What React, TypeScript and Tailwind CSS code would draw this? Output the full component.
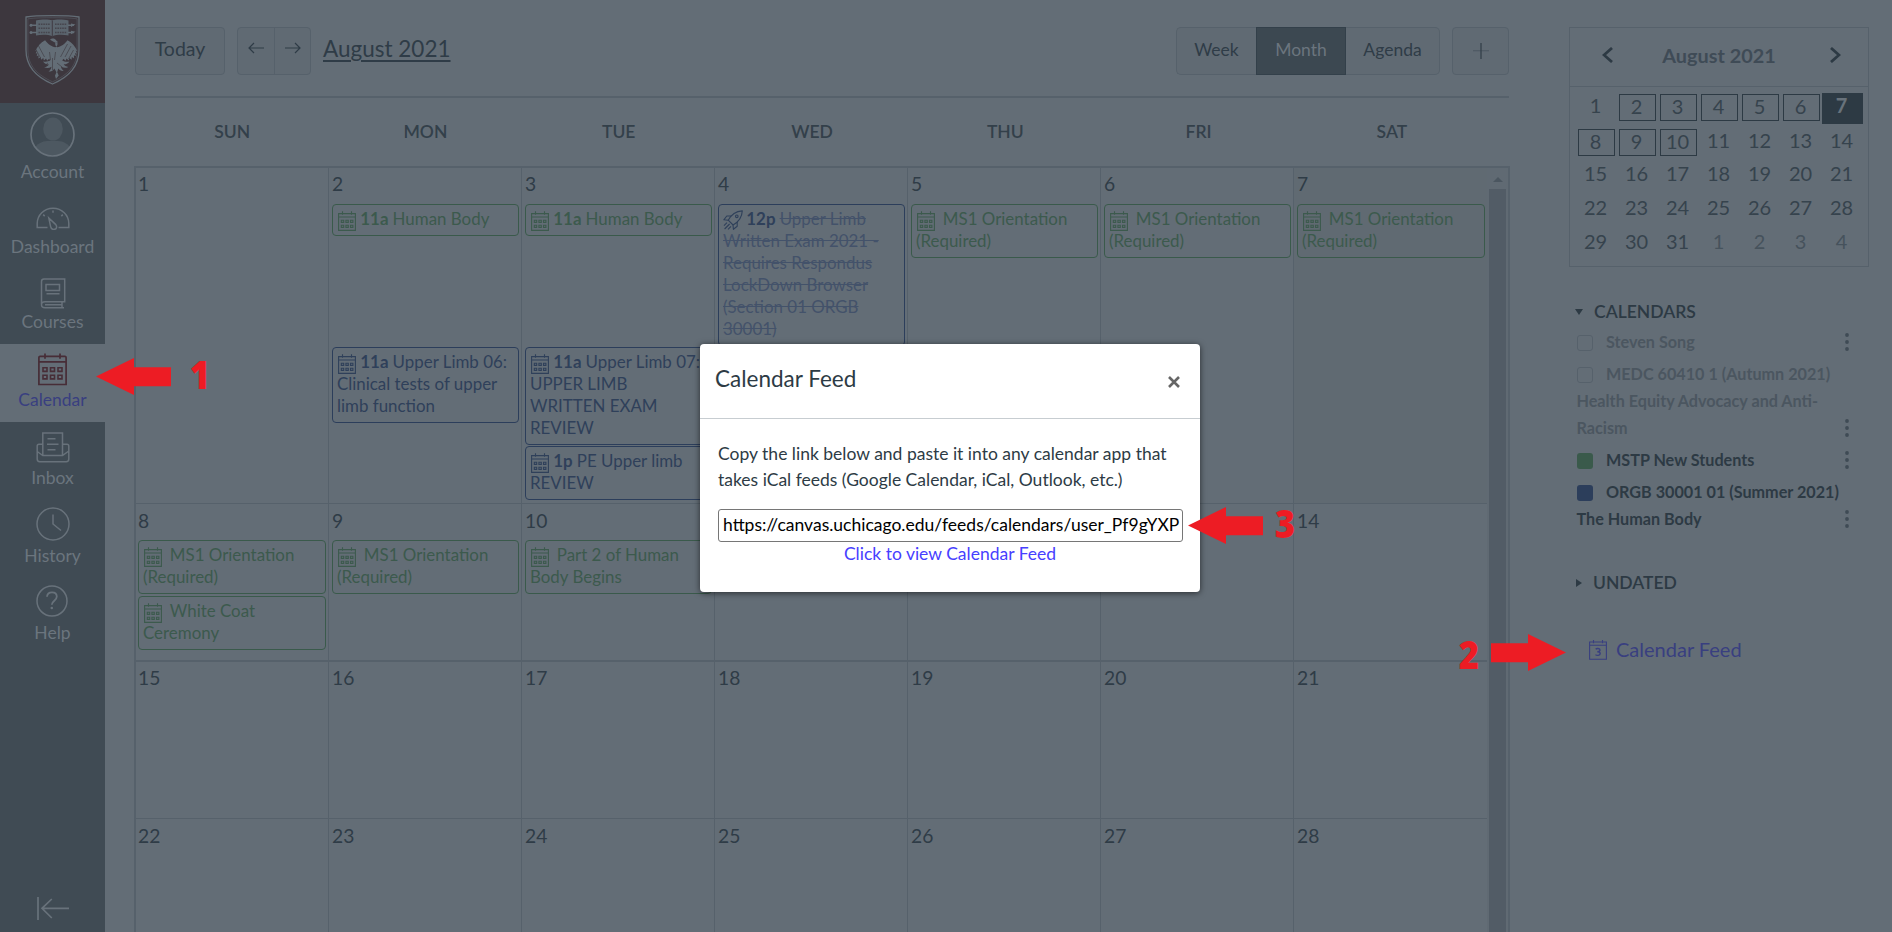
import type { ReactNode } from 'react';

type Tone = 'green' | 'blue';
type CalEvent = {
  time?: string;
  title: string;
  tone: Tone;
  done?: boolean;
  spacing?: string;
};
type Day = { n: number; events?: CalEvent[] };

const orientation: CalEvent = { title: 'MS1 Orientation (Required)', tone: 'green' };
const humanBody: CalEvent = { time: '11a', title: 'Human Body', tone: 'green' };

const weeks: { className: string; numberClass?: string; days: Day[] }[] = [
  {
    className: 'h-[336px] border-b',
    days: [
      { n: 1 },
      {
        n: 2,
        events: [
          humanBody,
          { time: '11a', title: 'Upper Limb 06: Clinical tests of upper limb function', tone: 'blue', spacing: 'mt-[111px]' },
        ],
      },
      {
        n: 3,
        events: [
          humanBody,
          { time: '11a', title: 'Upper Limb 07: UPPER LIMB WRITTEN EXAM REVIEW', tone: 'blue', spacing: 'mt-[111px]' },
          { time: '1p', title: 'PE Upper limb REVIEW', tone: 'blue', spacing: 'mt-px' },
        ],
      },
      {
        n: 4,
        events: [
          {
            time: '12p',
            title: 'Upper Limb Written Exam 2021 - Requires Respondus LockDown Browser (Section 01 ORGB 30001)',
            tone: 'blue',
            done: true,
          },
        ],
      },
      { n: 5, events: [orientation] },
      { n: 6, events: [orientation] },
      { n: 7, events: [orientation] },
    ],
  },
  {
    className: 'h-[158px] border-b-2',
    numberClass: 'pt-px',
    days: [
      { n: 8, events: [orientation, { title: 'White Coat Ceremony', tone: 'green', spacing: 'mt-0.5' }] },
      { n: 9, events: [orientation] },
      { n: 10, events: [{ title: 'Part 2 of Human Body Begins', tone: 'green' }] },
      { n: 11 },
      { n: 12 },
      { n: 13 },
      { n: 14 },
    ],
  },
  { className: 'h-[157px] border-b', days: [15, 16, 17, 18, 19, 20, 21].map((n) => ({ n })) },
  { className: 'h-[157px]', numberClass: 'pt-px', days: [22, 23, 24, 25, 26, 27, 28].map((n) => ({ n })) },
];

function MonthGlyph({ className }: { className: string }) {
  return (
    <svg viewBox="0 0 18 20" className={className} fill="none" stroke="currentColor" strokeWidth="1.1">
      <path d="M.6 2.6h16.8v16.8H.6zM.6 6h16.8M4.5.2v3.6M13.5.2v3.6" />
      <path d="M3.3 9.2h2.4v2.2H3.3zM7.9 9.2h2.4v2.2H7.9zM12.5 9.2h2.4v2.2h-2.4zM3.3 14.2h2.4v2.2H3.3zM7.9 14.2h2.4v2.2H7.9zM12.5 14.2h2.4v2.2h-2.4z" />
    </svg>
  );
}

function RocketGlyph({ className }: { className: string }) {
  return (
    <svg viewBox="0 0 20 20" className={className} fill="none" stroke="currentColor" strokeWidth="1.1" strokeLinejoin="round">
      <path d="M5.2 10.2C8 5 12 1.400 19.300.900c-.4 7.200-4 11.200-9.200 14.100z" />
      <path d="M8.200 6H3.800L.8 9.800l4.400.4M14.200 12v4.300l-3.800 3-.4-4.400M1 15.600l3-3M1.600 19l5-5M5 19.300l3-3" />
      <circle cx="13.800" cy="6.300" r="1.300" />
    </svg>
  );
}

function Crest() {
  return (
    <svg viewBox="0 0 105 103" className="h-[103px] w-[105px]" fill="none" stroke="#636d76">
      <path strokeWidth="1.300" d="M26 17c8-1.300 18-1.300 26.500-1.300S71 15.700 79 17v33c0 17-10 27-26.500 34C36 77 26 67 26 50z" />
      <path strokeWidth=".4" d="M27.900 18.800c8-1 16-1.100 24.600-1.100s16.600.100 24.600 1.100V50c0 16-9.600 25-24.600 31.800C37.500 75 27.900 66 27.900 50z" />
      <path fill="#5b656e" stroke="none" d="M36 20.500c5-1.200 12-1.500 16.200-.2 4.300-1.300 11.300-1 16.300.2V35.500c-5-1-12-1.200-16.300.8-4.200-2-11.200-1.800-16.200-.8z" />
      <path stroke="#3d373e" strokeWidth=".9" d="M52.300 20.500V36" />
      <path stroke="#3d373e" strokeWidth="1.500" strokeDasharray="1.600 .8" d="M38.500 24.300h11.500M38.500 28.300h11.500M38.500 32.500h11.500M55 24.300h11.500M55 28.300h11.500M55 32.500h11.500" opacity=".7" />
      <path strokeWidth="1.500" d="M30.500 25.200H37M30.500 32.400H37M68 25.200h6M68 32.400h6" />
      <g fill="#636d76" stroke="none">
        <circle cx="31" cy="25.200" r="1.500" />
        <circle cx="31" cy="32.400" r="1.500" />
        <path d="M71 23.500l4.500 1-4.500 2.500zM71 30.700l4.500 1-4.500 2.500z" />
        <path d="M50 39.800c1.500-1.800 5-1.800 6 .4l2.200 2-2.800.3c-.6 2 .2 3.800 1.800 4.800 3.600-.5 7.800-3.300 10.300-7 4.600 2.600 7.600 6 9.800 10.700l-1.600-.6 1.200 3.400-1.800-.9.8 3.400-2-1.100.3 3.200-2.400-1.500-.2 2.800-2.300-1.700-.6 2.500-2.200-1.900-1 2.200-2-2-1.300 1.700c1.900 1 4.300 1.600 7.200 1-1 2-3.200 2.900-5.700 2.800.9 1.500 2.400 2.400 4.600 2.700-2.200 1.400-5 1-7.300-.4.200 1.700 1 3 2.600 4.300-2.400.2-4.200-.6-5.300-2.400l-1.100 3.700 1.500 3.200-2.700 3.700-1-3.300 1.400-3.600-2-3.800c-1.400 2.200-3.300 3.200-5.900 3.200 1.900-1.300 2.800-3 3-4.800-2.300 1.500-5 1.700-7.400.5 2.400-.5 4-1.500 4.800-2.900-2.700 0-4.700-1-5.900-3 2.900.6 5.300.1 7.400-.9l-1.300-1.700-2 2-1-2.200-2.200 1.900-.6-2.500-2.300 1.700-.2-2.800-2.400 1.500.3-3.200-2 1.100.8-3.400-1.800.9 1.200-3.400-1.600.6c2.200-4.700 5.200-8.100 9.800-10.700 2.500 3.700 6.700 6.500 10.300 7 1.800-1 2.600-2.600 2-4.500l-3-.6z" />
      </g>
      <path stroke="#3d373e" strokeWidth=".6" d="M34 46l6 11M31.500 50l5 9M37.500 44l7 13M71 46l-6 11M73.500 50l-5 9M67.500 44l-7 13M49.500 52l1 8M55.500 52l-1 8M52.500 58v12M48 63l-5 4M57 63l5 4" />
    </svg>
  );
}

function EventCard({ event }: { event: CalEvent }) {
  const tone = event.tone === 'green' ? 'border-[#3a5a4b] text-[#3c5a4d]' : 'border-[#2c3e5b] text-[#2f405a]';
  return (
    <div className={`rounded-[4px] border pt-[3px] pr-[9px] pb-[5px] pl-1 text-[16.900px] leading-[22px] ${tone} ${event.spacing ?? ''}`}>
      {event.done ? (
        <RocketGlyph className="-mr-px -mb-[5px] inline h-5 w-5 align-baseline" />
      ) : (
        <MonthGlyph className="-mb-1.5 ml-px inline h-5 w-[18px] align-baseline" />
      )}{' '}
      {event.time ? <b className="font-bold">{event.time} </b> : <span className="inline-block w-[3.500px]" />}
      {event.done ? <span className="text-[#43526a] line-through">{event.title}</span> : event.title}
    </div>
  );
}

function NavItem({ label, active, className, children }: { label: string; active?: boolean; className: string; children: ReactNode }) {
  return (
    <a className={`flex w-full flex-col items-center text-[17.500px] leading-[22px] ${active ? 'bg-[#636d76] text-[#393f80]' : 'text-[#6b757e]'} ${className}`}>
      {children}
      <span>{label}</span>
    </a>
  );
}

function Sidebar() {
  return (
    <nav className="flex w-[105px] shrink-0 flex-col bg-[#404b54]">
      <div className="h-[103px] bg-[#3d373e]">
        <Crest />
      </div>
      <NavItem label="Account" className="h-[92px] pt-[9px]">
        <svg viewBox="0 0 45 45" className="mb-[3.500px] size-[45px] shrink-0">
          <defs>
            <clipPath id="avatar">
              <circle cx="22.500" cy="22.500" r="21" />
            </clipPath>
          </defs>
          <g clipPath="url(#avatar)" fill="#4d5861">
            <ellipse cx="23" cy="17" rx="9.800" ry="11.500" />
            <path d="M4 45V37c2-5 9-8 13-8h11c5 0 11 3 13 8v8z" />
          </g>
          <circle cx="22.500" cy="22.500" r="21.500" fill="none" stroke="#68727b" strokeWidth="1.700" />
        </svg>
      </NavItem>
      <NavItem label="Dashboard" className="h-[75px] pt-3">
        <svg viewBox="0 0 34 23" className="mb-[6px] h-[23px] w-[34px] shrink-0" fill="none" stroke="#68727b" strokeWidth="1.500">
          <path d="M11.500 20.500H1.200v-4C1.200 8 8 1.200 17 1.200S32.800 8 32.800 16.500v4H22.500" />
          <path d="M12.800 11l7 6.600c1.600 2.200.6 4.400-1.200 4.700-2 .4-3.600-.8-4-2.600zM17 3.500v2.300M7.200 7.600l1.500 1.500M26.800 7.600l-1.500 1.500" />
        </svg>
      </NavItem>
      <NavItem label="Courses" className="h-[74px] pt-2">
        <svg viewBox="0 0 26 31" className="mb-[2px] h-[31px] w-[26px] shrink-0" fill="none" stroke="#68727b" strokeWidth="1.500">
          <path d="M1.500 26V3.500C1.500 2 2.500 1 4 1h20.700v22.700H5c-2 0-3.500 1-3.500 3s1.500 3 3.500 3h19M22 24v5.500M6 6.500h13.500v6H6zM6.500 15.800h13M5 26.700h17" />
        </svg>
      </NavItem>
      <NavItem label="Calendar" active className="h-[78px] pt-[9px]">
        <svg viewBox="0 0 29 33" className="mb-[3px] h-[33px] w-[29px] shrink-0" fill="none" stroke="#472d37" strokeWidth="1.700">
          <path d="M.9 31.500V4.500c0-.8.500-1.200 1.200-1.200h24.800c.7 0 1.200.4 1.200 1.200v27zM.9 8.800h27.200M7 .5v5.300M22 .5v5.300" />
          <path strokeWidth="1.600" d="M5 14.800h4v3.600H5zM12.500 14.800h4v3.600h-4zM20 14.800h4v3.600h-4zM5 22.300h4v3.600H5zM12.500 22.300h4v3.600h-4zM20 22.300h4v3.600h-4z" />
        </svg>
      </NavItem>
      <NavItem label="Inbox" className="h-[77px] pt-2.5">
        <svg viewBox="0 0 34 31" className="mb-[4px] h-[31px] w-[34px] shrink-0" fill="none" stroke="#68727b" strokeWidth="1.500">
          <path d="M6.800 23.500V1h19.700v22.500M6.800 12.200H3C2 12.200 1.200 13 1.200 14v13c0 1.800.9 2.700 2.600 2.700h26.400c1.700 0 2.600-.9 2.600-2.700V14c0-1-.8-1.800-1.800-1.800h-4.500M1.200 19.500l5.600 4h19.700l6.300-4.500M11.500 6.700h8M11 12.200h11.500M11.500 17.800h8" />
        </svg>
      </NavItem>
      <NavItem label="History" className="h-[78px] pt-[8px]">
        <svg viewBox="0 0 34 34" className="mb-[3.500px] size-[34px] shrink-0" fill="none" stroke="#68727b" strokeWidth="1.500">
          <circle cx="17" cy="17" r="16" />
          <path d="M17 7.500V17l8 6.500" />
        </svg>
      </NavItem>
      <NavItem label="Help" className="pt-[8px]">
        <svg viewBox="0 0 34 32" className="mb-[5px] h-[32px] w-[36px] shrink-0" fill="none" stroke="#68727b" strokeWidth="1.500">
          <circle cx="16" cy="16" r="15" />
          <path strokeWidth="1.800" d="M11 11.800c.2-3 2.300-4.500 5-4.500 2.900 0 4.800 1.700 4.800 4.300 0 4.200-5 4-5 8.200" />
          <circle cx="15.800" cy="23" r="1.300" fill="#68727b" stroke="none" />
        </svg>
      </NavItem>
      <div className="mt-auto flex justify-center pb-3">
        <svg viewBox="0 0 34 23" className="h-[23px] w-[34px]" fill="none" stroke="#68727b" strokeWidth="1.700">
          <path d="M2 0v23M33 11.300H6M15.800 2L6 11.300 15.800 21" />
        </svg>
      </div>
    </nav>
  );
}

const buttonBox = 'h-12 border border-[#56616b] bg-[#606a73]';

function Toolbar() {
  return (
    <header className="flex h-[71px] items-start border-b-2 border-[#56616b] text-[17.500px] text-[#2f3c47]">
      <button className={`${buttonBox} w-[90px] rounded-[4px] pb-[5px] text-[19.500px]`}>Today</button>
      <div className="ml-3 flex">
        <button className={`${buttonBox} flex w-[38px] justify-center rounded-l-[4px] pt-[13px]`}>
          <svg viewBox="0 0 16 14" className="h-[14px] w-4" fill="none" stroke="currentColor" strokeWidth="1.200">
            <path d="M16 7H1.200M6 2L1 7l5 5" />
          </svg>
        </button>
        <button className={`${buttonBox} -ml-px flex w-[37px] justify-center rounded-r-[4px] pt-[13px]`}>
          <svg viewBox="0 0 16 14" className="h-[14px] w-4" fill="none" stroke="currentColor" strokeWidth="1.200">
            <path d="M0 7h14.800M10 2l5 5-5 5" />
          </svg>
        </button>
      </div>
      <h2 className="ml-3 text-[22.500px] leading-[44px] underline decoration-[1.500px] underline-offset-[3px]">August 2021</h2>
      <div className="ml-auto flex">
        <button className={`${buttonBox} w-[80px] rounded-l-[5px] border-r-0 pb-0.5`}>Week</button>
        <button className="h-12 w-[90px] border border-[#33404a] bg-[#3c4851] pb-0.5 text-[#6b757e]">Month</button>
        <button className={`${buttonBox} w-[94px] rounded-r-[5px] border-l-0 pb-0.5`}>Agenda</button>
      </div>
      <button className={`${buttonBox} ml-3 flex w-[57px] items-center justify-center rounded-[4px]`}>
        <svg viewBox="0 0 16 16" className="size-4" strokeWidth="1.300">
          <path d="M0 7.700h16" stroke="#505b65" />
          <path d="M8 0v16" stroke="#33404a" />
        </svg>
      </button>
    </header>
  );
}

function MonthView() {
  return (
    <>
      <div className="grid h-[68px] w-[1353px] grid-cols-7 text-center text-[17.500px] leading-[67px] font-semibold text-[#33404a]">
        {['SUN', 'MON', 'TUE', 'WED', 'THU', 'FRI', 'SAT'].map((d) => (
          <div key={d} className="pl-px">{d}</div>
        ))}
      </div>
      <div className="-mr-px -ml-px flex h-[800px] border-2 border-[#56616b]">
        <div className="w-[1351px]">
          {weeks.map((week) => (
            <div key={week.days[0].n} className={`grid grid-cols-7 border-[#56616b] ${week.className}`}>
              {week.days.map((day) => (
                <div
                  key={day.n}
                  className={`border-r border-[#56616b] pr-0.5 pl-[3px] first:pl-0.5 last:border-r-0 ${day.n === 7 ? 'bg-[#606a72]' : ''}`}
                >
                  <div className={`h-9 text-[19.250px] leading-[32px] text-[#2f3c47] ${week.numberClass ?? ''}`}>{day.n}</div>
                  {day.events?.map((event, i) => <EventCard key={i} event={event} />)}
                </div>
              ))}
            </div>
          ))}
        </div>
        <div className="flex flex-1 flex-col items-center bg-[#606a73] pt-[9px]">
          <div className="h-0 w-0 border-x-[5px] border-b-[5px] border-x-transparent border-b-[#4b5660]" />
          <div className="mt-[7px] w-[17px] flex-1 bg-[#525c66]" />
        </div>
      </div>
    </>
  );
}

const miniWeeks = [
  { className: 'h-[35px]', days: [1, 2, 3, 4, 5, 6, 7] },
  { className: 'h-[33px]', days: [8, 9, 10, 11, 12, 13, 14] },
  { className: 'h-[34px]', days: [15, 16, 17, 18, 19, 20, 21] },
  { className: 'h-[34px]', days: [22, 23, 24, 25, 26, 27, 28] },
  { className: 'h-[34px]', days: [29, 30, 31, 1, 2, 3, 4] },
];

function miniDayClass(week: number, day: number) {
  if (week === 0 && day === 7) return 'h-[31px] w-[41px] translate-x-px bg-[#2d3a44] pt-px pr-0.5 font-bold text-[#68727b]';
  if (week < 2 && day > 1 && day < 11)
    return 'mt-px h-[27px] w-[37px] translate-x-px border border-[#2d3a44] pr-0.5 text-[#36434d]';
  return week === 4 && day < 10 ? 'pt-px text-[#46525c]' : 'pt-px text-[#36434d]';
}

function MiniCalendar() {
  return (
    <div className="h-[240px] w-[300px] border border-[#56616b]">
      <div className="flex h-[59px] items-center justify-between border-b border-[#56616b] pr-[27px] pb-1 pl-8">
        <svg viewBox="0 0 11 16" className="h-4 w-[11px]" fill="none" stroke="#2d3a44" strokeWidth="2.800">
          <path d="M10 1L2 8l8 7" />
        </svg>
        <span className="pr-[5px] text-[19.850px] leading-6 font-bold text-[#3f4b56]">August 2021</span>
        <svg viewBox="0 0 11 16" className="h-4 w-[11px]" fill="none" stroke="#2d3a44" strokeWidth="2.800">
          <path d="M1 1l8 7-8 7" />
        </svg>
      </div>
      <div className="pt-[6px] pl-[5px]">
        {miniWeeks.map((week, w) => (
          <div key={w} className={`flex ${week.className}`}>
            {week.days.map((day) => (
              <div key={day} className="flex w-[41px] justify-center">
                <div className={`text-center text-[20px] leading-[22px] ${miniDayClass(w, day)}`}>{day}</div>
              </div>
            ))}
          </div>
        ))}
      </div>
    </div>
  );
}

function CalendarRow({ label, swatch, text, className }: { label: string; swatch: string; text: string; className: string }) {
  return (
    <div className={`flex items-end justify-between ${className}`}>
      <div className={`w-[266px] shrink-0 text-[16.200px] leading-[27px] font-bold ${text}`}>
        <span className={`mr-[13.500px] -mb-[2.500px] inline-block size-4 rounded-[3px] ${swatch}`} />
        {label}
      </div>
      <svg viewBox="0 0 4 18" className="mb-[4px] h-[18px] w-1 shrink-0" fill="#3f4b55">
        <circle cx="2" cy="2" r="1.900" />
        <circle cx="2" cy="9" r="1.900" />
        <circle cx="2" cy="16" r="1.900" />
      </svg>
    </div>
  );
}

function RightRail() {
  return (
    <aside className="ml-[60px] w-[300px] shrink-0 pt-[27px]">
      <MiniCalendar />
      <div className="mt-[33px] flex h-6 items-center gap-[11px] pl-1.5 text-[17.500px] leading-6 text-[#2d3a44]">
        <div className="h-0 w-0 border-x-4 border-t-[6px] border-x-transparent border-t-[#2d3a44]" />
        <span className="font-semibold">CALENDARS</span>
      </div>
      <div className="mt-1 w-[280px] pl-[7.500px]">
        <CalendarRow label="Steven Song" swatch="border border-[#56616b]" text="text-[#4b5660]" className="" />
        <CalendarRow
          label="MEDC 60410 1 (Autumn 2021) Health Equity Advocacy and Anti-Racism"
          swatch="border border-[#56616b]"
          text="text-[#4b5660]"
          className="mt-[5px]"
        />
        <CalendarRow label="MSTP New Students" swatch="bg-[#3a5a4b]" text="text-[#2d3a44]" className="mt-[5px]" />
        <CalendarRow label="ORGB 30001 01 (Summer 2021) The Human Body" swatch="bg-[#2c3e5b]" text="text-[#2d3a44]" className="mt-[5px]" />
      </div>
      <div className="mt-[39px] flex h-6 items-center gap-[11px] pl-[7px] text-[17.500px] leading-6 text-[#2d3a44]">
        <div className="h-0 w-0 border-y-4 border-l-[6px] border-y-transparent border-l-[#2d3a44]" />
        <span className="font-semibold">UNDATED</span>
      </div>
      <a className="mt-[40px] flex h-7 items-center gap-[9px] pl-5 text-[20px] leading-7 text-[#393f80]">
        <svg viewBox="0 0 18 20" className="mt-0.5 h-5 w-[18px]" fill="none" stroke="currentColor" strokeWidth="1.100">
          <path d="M.6 2h16.800v17.300H.6zM.6 5.300h16.800M4.500 0v3.300M13.500 0v3.300" />
          <path strokeWidth="1.400" d="M6.700 9.200c.9-1 4.300-1 4.300.9 0 1.500-1.500 1.600-2.700 1.600 1.400 0 2.900.3 2.900 1.900 0 2.200-3.700 2.200-4.700 1" />
        </svg>
        Calendar Feed
      </a>
    </aside>
  );
}

function FeedDialog() {
  return (
    <div className="absolute top-[344px] left-[700px] flex h-[248px] w-[500px] flex-col rounded-[4px] bg-white text-[17.500px] text-[#2d3b45] shadow-[0_1px_6px_rgba(0,0,0,0.6)]">
      <div className="flex h-[75px] justify-between border-b border-[#c7cdd1] pr-5 pl-[15px]">
        <h2 className="pt-[21px] text-[22.500px] leading-[28px]">Calendar Feed</h2>
        <svg viewBox="0 0 12 12" className="mt-8 h-3 w-3" stroke="#666666" strokeWidth="2.600">
          <path d="M1 1l10 10M11 1L1 11" />
        </svg>
      </div>
      <div className="px-[18px] pt-[22px]">
        <p className="leading-[26.250px]">
          Copy the link below and paste it into any calendar app that takes iCal feeds (Google Calendar, iCal, Outlook, etc.)
        </p>
        <div className="mt-[15px] h-[33px] w-[465px] overflow-hidden rounded-[3px] border border-[#767676] px-1 leading-[30px] whitespace-nowrap text-black">
          https://canvas.uchicago.edu/feeds/calendars/user_Pf9gYXP
        </div>
        <a className="block text-center leading-[24px] text-[#4740ff]">Click to view Calendar Feed</a>
      </div>
    </div>
  );
}

function Pointer({ step, side, className, digitClass }: { step: number; side: 'left' | 'right'; className: string; digitClass: string }) {
  return (
    <div className={`absolute flex items-center text-[#ed1c24] ${side === 'left' ? '' : 'flex-row-reverse'} ${className}`}>
      <svg viewBox="0 0 75 37" className={`h-[37px] w-[75px] ${side === 'left' ? '' : '-scale-x-100'}`} fill="currentColor">
        <path d="M0 18.500L38 0v9.300h37v18.900H38V37z" />
      </svg>
      <span className={`w-[24px] scale-x-90 text-center font-['Open_Sans',sans-serif] text-[38.500px] leading-[37px] font-extrabold ${digitClass}`}>
        {step}
      </span>
    </div>
  );
}

export default function App() {
  return (
    <div className="relative flex h-[932px] w-full overflow-hidden bg-[#636d76] font-[Lato,sans-serif]">
      <Sidebar />
      <main className="ml-[30px] w-[1374px] shrink-0 pt-[27px]">
        <Toolbar />
        <MonthView />
      </main>
      <RightRail />
      <FeedDialog />
      <Pointer step={1} side="left" className="top-[358px] left-24 gap-[17px]" digitClass="-translate-y-[2px]" />
      <Pointer step={2} side="right" className="top-[634px] left-[1457px] gap-2.5" digitClass="translate-y-[2px]" />
      <Pointer step={3} side="left" className="top-[507px] left-[1188px] gap-2.5" digitClass="-translate-y-[2px]" />
    </div>
  );
}
